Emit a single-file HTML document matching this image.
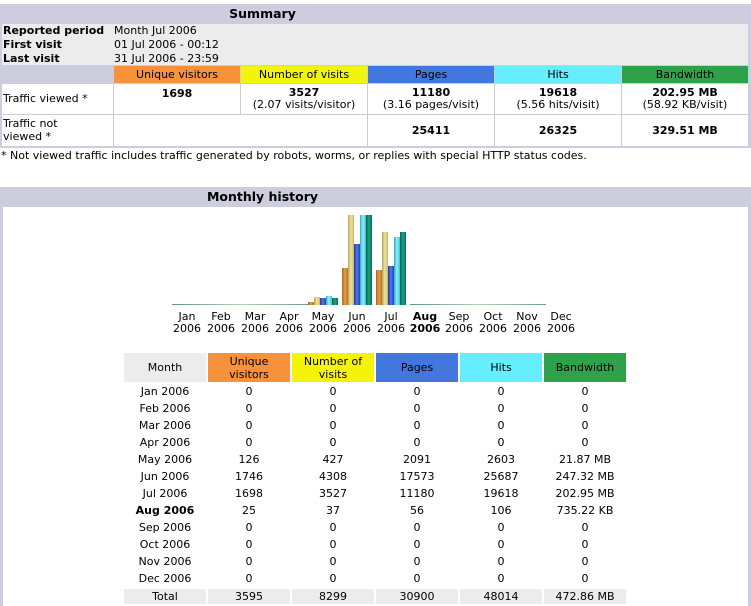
<!DOCTYPE html><html><head><style>
body{margin:0;width:751px;height:606px;position:relative;background:#fff;font-family:"DejaVu Sans","Liberation Sans",sans-serif;font-size:11px;color:#000;overflow:hidden}
.a{position:absolute;box-sizing:border-box}
.c{text-align:center}
.b{font-weight:bold}
.bar{position:absolute}
.o{background:linear-gradient(90deg,#a86a18,#e8a048,#b87020)}
.y{background:linear-gradient(90deg,#b8a858,#f0e0a0,#c8b868)}
.u{background:linear-gradient(90deg,#2038a8,#5078f0,#2040b0)}
.cy{background:linear-gradient(90deg,#30b0c0,#90f0f8,#40c0d0)}
.g{background:linear-gradient(90deg,#006850,#20a080,#007058)}
.ml{position:absolute;width:34px;text-align:center;top:311px;line-height:12px;font-size:11px}
</style></head><body>
<div class="a" style="left:0;top:4px;width:751px;height:144px;background:#cdcddf"></div>
<div class="a b c" style="left:0;top:5px;width:525px;height:18px;font-size:12.5px;line-height:18px">Summary</div>
<div class="a" style="left:2px;top:24px;width:746px;height:41px;background:#ececec"></div>
<div class="a b" style="left:3px;top:24px;line-height:14px">Reported period<br>First visit<br>Last visit</div>
<div class="a" style="left:114px;top:24px;line-height:14px">Month Jul 2006<br>01 Jul 2006 - 00:12<br>31 Jul 2006 - 23:59</div>
<div class="a c" style="left:114px;top:66px;width:126px;height:17px;line-height:17px;background:#f8923a">Unique visitors</div>
<div class="a c" style="left:241px;top:66px;width:126px;height:17px;line-height:17px;background:#f4f40a">Number of visits</div>
<div class="a c" style="left:368px;top:66px;width:126px;height:17px;line-height:17px;background:#4477dd">Pages</div>
<div class="a c" style="left:495px;top:66px;width:126px;height:17px;line-height:17px;background:#66eeff">Hits</div>
<div class="a c" style="left:622px;top:66px;width:126px;height:17px;line-height:17px;background:#2ea24a">Bandwidth</div>
<div class="a" style="left:2px;top:84px;width:746px;height:62px;background:#ccc"></div>
<div class="a" style="left:2px;top:84px;width:111px;height:30px;background:#fff;padding:8px 1px;">Traffic viewed *</div>
<div class="a c" style="left:114px;top:84px;width:126px;height:30px;background:#fff;padding-top:3px"><b>1698</b></div>
<div class="a c" style="left:241px;top:84px;width:126px;height:30px;background:#fff;padding-top:3px;line-height:12px"><b>3527</b><br>(2.07 visits/visitor)</div>
<div class="a c" style="left:368px;top:84px;width:126px;height:30px;background:#fff;padding-top:3px;line-height:12px"><b>11180</b><br>(3.16 pages/visit)</div>
<div class="a c" style="left:495px;top:84px;width:126px;height:30px;background:#fff;padding-top:3px;line-height:12px"><b>19618</b><br>(5.56 hits/visit)</div>
<div class="a c" style="left:622px;top:84px;width:126px;height:30px;background:#fff;padding-top:3px;line-height:12px"><b>202.95 MB</b><br>(58.92 KB/visit)</div>
<div class="a" style="left:2px;top:115px;width:111px;height:31px;background:#fff;padding:2px 1px;line-height:13px">Traffic not<br>viewed *</div>
<div class="a" style="left:114px;top:115px;width:253px;height:31px;background:#fff"></div>
<div class="a c b" style="left:368px;top:115px;width:126px;height:31px;background:#fff;line-height:31px">25411</div>
<div class="a c b" style="left:495px;top:115px;width:126px;height:31px;background:#fff;line-height:31px">26325</div>
<div class="a c b" style="left:622px;top:115px;width:126px;height:31px;background:#fff;line-height:31px">329.51 MB</div>
<div class="a" style="left:1px;top:149px;line-height:14px">* Not viewed traffic includes traffic generated by robots, worms, or replies with special HTTP status codes.</div>
<div class="a" style="left:0;top:187px;width:751px;height:419px;background:#cdcddf"></div>
<div class="a b c" style="left:0;top:188px;width:525px;height:18px;font-size:12.5px;line-height:18px">Monthly history</div>
<div class="a" style="left:3px;top:207px;width:745px;height:399px;background:#fff"></div>
<div class="bar o" style="left:172px;top:304px;width:136px;height:1px"></div>
<div class="bar cy" style="left:172px;top:304px;width:136px;height:1px;opacity:.6"></div>
<div class="bar o" style="left:410px;top:304px;width:136px;height:1px"></div>
<div class="bar cy" style="left:410px;top:304px;width:136px;height:1px;opacity:.6"></div>
<div class="bar o" style="left:308px;top:302px;width:6px;height:3px"></div>
<div class="bar y" style="left:314px;top:297px;width:6px;height:8px"></div>
<div class="bar u" style="left:320px;top:298px;width:6px;height:7px"></div>
<div class="bar cy" style="left:326px;top:296px;width:6px;height:9px"></div>
<div class="bar g" style="left:332px;top:298px;width:6px;height:7px"></div>
<div class="bar o" style="left:342px;top:268px;width:6px;height:37px"></div>
<div class="bar y" style="left:348px;top:215px;width:6px;height:90px"></div>
<div class="bar u" style="left:354px;top:244px;width:6px;height:61px"></div>
<div class="bar cy" style="left:360px;top:215px;width:6px;height:90px"></div>
<div class="bar g" style="left:366px;top:215px;width:6px;height:90px"></div>
<div class="bar o" style="left:376px;top:270px;width:6px;height:35px"></div>
<div class="bar y" style="left:382px;top:232px;width:6px;height:73px"></div>
<div class="bar u" style="left:388px;top:266px;width:6px;height:39px"></div>
<div class="bar cy" style="left:394px;top:237px;width:6px;height:68px"></div>
<div class="bar g" style="left:400px;top:232px;width:6px;height:73px"></div>
<div class="ml" style="left:170px">Jan<br>2006</div>
<div class="ml" style="left:204px">Feb<br>2006</div>
<div class="ml" style="left:238px">Mar<br>2006</div>
<div class="ml" style="left:272px">Apr<br>2006</div>
<div class="ml" style="left:306px">May<br>2006</div>
<div class="ml" style="left:340px">Jun<br>2006</div>
<div class="ml" style="left:374px">Jul<br>2006</div>
<div class="ml b" style="left:408px">Aug<br>2006</div>
<div class="ml" style="left:442px">Sep<br>2006</div>
<div class="ml" style="left:476px">Oct<br>2006</div>
<div class="ml" style="left:510px">Nov<br>2006</div>
<div class="ml" style="left:544px">Dec<br>2006</div>
<div class="a c" style="left:124px;top:353px;width:82px;height:29px;line-height:29px;background:#ececec">Month</div>
<div class="a c" style="left:208px;top:353px;width:82px;height:29px;line-height:13px;padding-top:2px;background:#f8923a">Unique<br>visitors</div>
<div class="a c" style="left:292px;top:353px;width:82px;height:29px;line-height:13px;padding-top:2px;background:#f4f40a">Number of<br>visits</div>
<div class="a c" style="left:376px;top:353px;width:82px;height:29px;line-height:29px;background:#4477dd">Pages</div>
<div class="a c" style="left:460px;top:353px;width:82px;height:29px;line-height:29px;background:#66eeff">Hits</div>
<div class="a c" style="left:544px;top:353px;width:82px;height:29px;line-height:29px;background:#2ea24a">Bandwidth</div>
<div class="a c" style="left:124px;top:383px;width:82px;line-height:17px">Jan 2006<br>Feb 2006<br>Mar 2006<br>Apr 2006<br>May 2006<br>Jun 2006<br>Jul 2006<br><b>Aug 2006</b><br>Sep 2006<br>Oct 2006<br>Nov 2006<br>Dec 2006</div>
<div class="a c" style="left:208px;top:383px;width:82px;line-height:17px">0<br>0<br>0<br>0<br>126<br>1746<br>1698<br>25<br>0<br>0<br>0<br>0</div>
<div class="a c" style="left:292px;top:383px;width:82px;line-height:17px">0<br>0<br>0<br>0<br>427<br>4308<br>3527<br>37<br>0<br>0<br>0<br>0</div>
<div class="a c" style="left:376px;top:383px;width:82px;line-height:17px">0<br>0<br>0<br>0<br>2091<br>17573<br>11180<br>56<br>0<br>0<br>0<br>0</div>
<div class="a c" style="left:460px;top:383px;width:82px;line-height:17px">0<br>0<br>0<br>0<br>2603<br>25687<br>19618<br>106<br>0<br>0<br>0<br>0</div>
<div class="a c" style="left:544px;top:383px;width:82px;line-height:17px">0<br>0<br>0<br>0<br>21.87 MB<br>247.32 MB<br>202.95 MB<br>735.22 KB<br>0<br>0<br>0<br>0</div>
<div class="a c" style="left:124px;top:589px;width:82px;height:15px;line-height:15px;background:#ececec">Total</div>
<div class="a c" style="left:208px;top:589px;width:82px;height:15px;line-height:15px;background:#ececec">3595</div>
<div class="a c" style="left:292px;top:589px;width:82px;height:15px;line-height:15px;background:#ececec">8299</div>
<div class="a c" style="left:376px;top:589px;width:82px;height:15px;line-height:15px;background:#ececec">30900</div>
<div class="a c" style="left:460px;top:589px;width:82px;height:15px;line-height:15px;background:#ececec">48014</div>
<div class="a c" style="left:544px;top:589px;width:82px;height:15px;line-height:15px;background:#ececec">472.86 MB</div>
</body></html>
